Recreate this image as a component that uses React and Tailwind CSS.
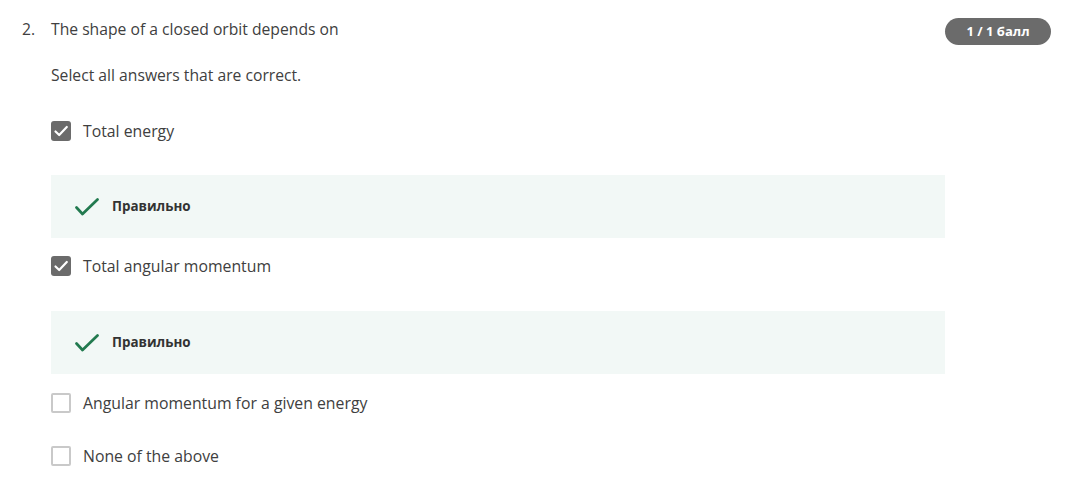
const Checkbox = ({ checked }) =>
    checked ? (
        <div className="w-5 h-5 rounded-[3px] bg-[#6b6b6b] flex items-center justify-center shrink-0">
            <svg width="16" height="16" viewBox="0 0 16 16" fill="none">
                <path d="M2.5 8.5 L6.2 12 L13.8 4" stroke="white" strokeWidth="2.2" strokeLinecap="round" strokeLinejoin="round" />
            </svg>
        </div>
    ) : (
        <div className="w-5 h-5 rounded-[2px] border-2 border-[#c9c9c9] bg-white shrink-0" />
    );

const Answer = ({ checked, label, className }) => (
    <div className={`flex items-center h-5 ${className}`}>
        <Checkbox checked={checked} />
        <span className="ml-3 text-[15.8px] leading-5 text-[#404040]">{label}</span>
    </div>
);

const Feedback = ({ className }) => (
    <div className={`w-[894px] h-[63px] bg-[#f2f8f6] flex items-center pl-6 ${className}`}>
        <svg width="24" height="18" viewBox="0 0 24 18" fill="none">
            <path d="M1.5 9.5 L7.5 16 L22.5 1.5" stroke="#227a4f" strokeWidth="2.7" strokeLinecap="round" strokeLinejoin="round" />
        </svg>
        <span className="ml-[13px] text-[13.4px] font-bold text-[#333333]">Правильно</span>
    </div>
);

export default function App() {
    return (
        <div className="w-[1071px] h-[501px] bg-white overflow-hidden font-['Open_Sans',sans-serif]">
            <div className="flex justify-between pt-[17px] pl-[22px] pr-5">
                <div className="flex text-[15.7px] leading-6 text-[#404040]">
                    <span className="w-[29px]">2.</span>
                    <span>The shape of a closed orbit depends on</span>
                </div>
                <div className="mt-[1px] h-[27px] w-[106px] rounded-full bg-[#6b6b6b] text-white text-[13px] font-bold flex items-center justify-center">
                    1 / 1 балл
                </div>
            </div>

            <div className="pl-[51px] flex flex-col">
                <p className="mt-[19px] text-[15.7px] leading-[22px] text-[#404040]">Select all answers that are correct.</p>
                <Answer checked label="Total energy" className="mt-[35px]" />
                <Feedback className="mt-[34px]" />
                <Answer checked label="Total angular momentum" className="mt-[18px]" />
                <Feedback className="mt-[35px]" />
                <Answer label="Angular momentum for a given energy" className="mt-[19px]" />
                <Answer label="None of the above" className="mt-[33px]" />
            </div>
        </div>
    );
}
